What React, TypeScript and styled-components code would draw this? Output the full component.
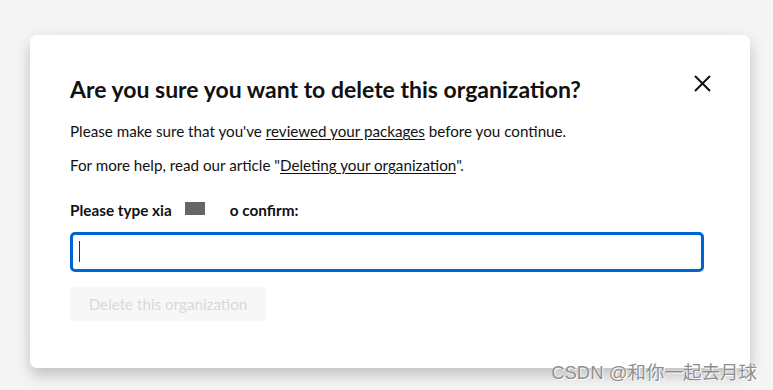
import React from "react";
import styled, { createGlobalStyle } from "styled-components";

const Global = createGlobalStyle`
  html, body { margin: 0; padding: 0; background: #f5f5f5; }
  body { font-family: Lato, "Noto Sans", sans-serif; color: #111; }
`;

const Page = styled.div`
  position: relative;
  width: 773px;
  height: 390px;
  padding: 35px 0 0 30px;
  box-sizing: border-box;
  overflow: hidden;
`;

const Modal = styled.div`
  width: 720px;
  height: 333px;
  background: #fff;
  border-radius: 7px;
  box-shadow: 0 8px 14px rgba(0, 0, 0, 0.18), 0 0 24px rgba(0, 0, 0, 0.05);
  box-sizing: border-box;
  padding: 39px 40px 0 40px;
  display: flex;
  flex-direction: column;
`;

const Header = styled.div`
  display: flex;
  align-items: flex-start;
  justify-content: space-between;
`;

const Title = styled.h2`
  margin: 0;
  font-size: 23px;
  line-height: 30px;
  font-weight: 700;
  color: #111;
`;

const CloseBtn = styled.button`
  border: none;
  background: none;
  padding: 0;
  margin: -2px -3px 0 0;
  width: 22px;
  height: 22px;
  display: flex;
  align-items: center;
  justify-content: center;
  cursor: pointer;
`;

const Para = styled.p<{ $top: number }>`
  margin: ${(p) => p.$top}px 0 0 0;
  font-size: 15.2px;
  line-height: 24px;
  color: #111;
`;

const Link = styled.a`
  color: #111;
  text-decoration: underline;
  text-underline-offset: 2px;
`;

const Label = styled.label`
  margin-top: 23px;
  font-size: 15.3px;
  line-height: 20px;
  font-weight: 700;
  display: flex;
  align-items: center;
`;

const Redact = styled.span`
  display: inline-flex;
  align-items: center;
  width: 58px;
  padding-left: 13px;
  box-sizing: border-box;
  &::before {
    content: "";
    width: 20px;
    height: 13px;
    background: #666;
    margin-top: -3px;
  }
`;

const Input = styled.input`
  margin-top: 12px;
  width: 634px;
  height: 40px;
  box-sizing: border-box;
  border: 3px solid #0064d2;
  border-radius: 5px;
  outline: none;
  padding: 0 8px;
  font-size: 15px;
  font-family: inherit;
`;

const Caret = styled.span`
  position: absolute;
  left: 79px;
  top: 241px;
  width: 1px;
  height: 21px;
  background: #333;
`;

const DeleteBtn = styled.button`
  margin-top: 15px;
  align-self: flex-start;
  width: 196px;
  height: 34px;
  border: none;
  border-radius: 3px;
  background: #f7f7f7;
  color: #d9d9d9;
  font-family: inherit;
  font-size: 15.2px;
  cursor: not-allowed;
`;

const Watermark = styled.div`
  position: absolute;
  right: 16px;
  bottom: 6px;
  font-family: "Liberation Sans", "Noto Sans CJK SC", sans-serif;
  font-size: 18.5px;
  color: #8f8f8f;
  text-shadow: 0 0 1px #fff, 1px 1px 0 #fff;
`;

export default function App() {
  return (
    <Page>
      <Global />
      <Modal>
        <Header>
          <Title>Are you sure you want to delete this organization?</Title>
          <CloseBtn aria-label="Close">
            <svg width="17" height="17" viewBox="0 0 17 17">
              <path d="M1 1 L16 16 M16 1 L1 16" stroke="#111" strokeWidth="2" />
            </svg>
          </CloseBtn>
        </Header>
        <Para $top={15}>
          Please make sure that you've <Link href="#">reviewed your packages</Link> before you continue.
        </Para>
        <Para $top={10}>
          For more help, read our article "<Link href="#">Deleting your organization</Link>".
        </Para>
        <Label>
          Please type xia<Redact />o confirm:
        </Label>
        <Input aria-label="Confirm organization name" />
        <DeleteBtn disabled>Delete this organization</DeleteBtn>
      </Modal>
      <Caret />
      <Watermark>CSDN @和你一起去月球</Watermark>
    </Page>
  );
}
